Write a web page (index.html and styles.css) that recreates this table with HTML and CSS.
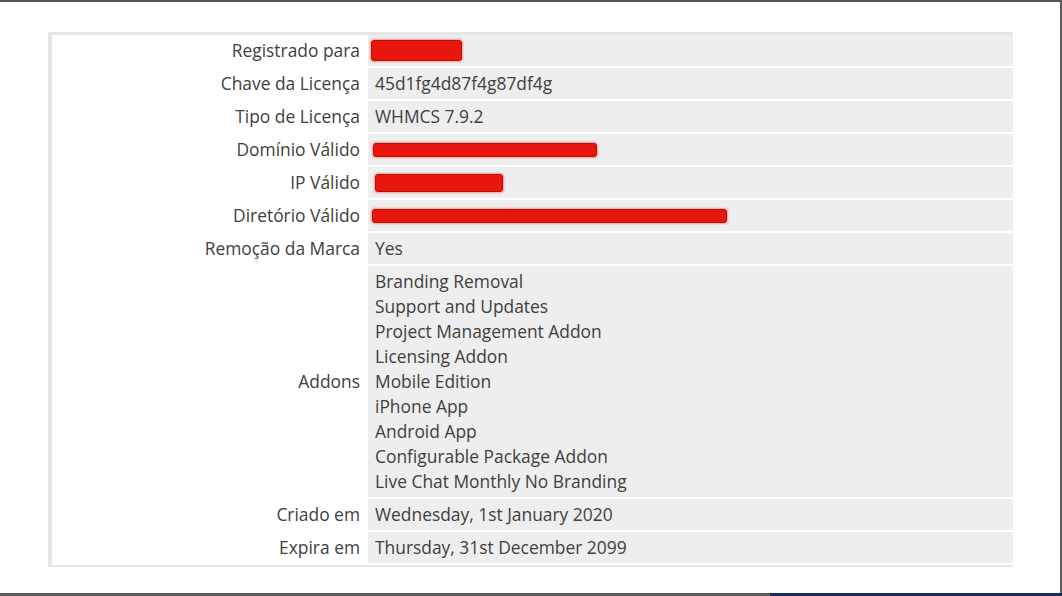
FILE: index.html
```html
<!DOCTYPE html>
<html lang="pt">
<head>
<meta charset="utf-8">
<title>Licença</title>
<link rel="stylesheet" href="styles.css">
</head>
<body>
<div class="frame">
  <main class="main">
    <section class="panel">
      <div class="row"><div class="label">Registrado para</div><div class="value"><span class="redact redact-name"></span></div></div>
      <div class="row"><div class="label">Chave da Licença</div><div class="value">45d1fg4d87f4g87df4g</div></div>
      <div class="row"><div class="label">Tipo de Licença</div><div class="value">WHMCS 7.9.2</div></div>
      <div class="row"><div class="label">Domínio Válido</div><div class="value"><span class="redact redact-domain"></span></div></div>
      <div class="row"><div class="label">IP Válido</div><div class="value"><span class="redact redact-ip"></span></div></div>
      <div class="row"><div class="label">Diretório Válido</div><div class="value"><span class="redact redact-dir"></span></div></div>
      <div class="row"><div class="label">Remoção da Marca</div><div class="value">Yes</div></div>
      <div class="row"><div class="label">Addons</div><div class="value list">
        <div>Branding Removal</div>
        <div>Support and Updates</div>
        <div>Project Management Addon</div>
        <div>Licensing Addon</div>
        <div>Mobile Edition</div>
        <div>iPhone App</div>
        <div>Android App</div>
        <div>Configurable Package Addon</div>
        <div>Live Chat Monthly No Branding</div>
      </div></div>
      <div class="row"><div class="label">Criado em</div><div class="value">Wednesday, 1st January 2020</div></div>
      <div class="row"><div class="label">Expira em</div><div class="value">Thursday, 31st December 2099</div></div>
    </section>
  </main>
  <footer class="bottom-bar"><div class="bar-gray"></div><div class="bar-navy"></div></footer>
</div>
</body>
</html>
```

FILE: styles.css
```css
* { box-sizing: border-box; }
html, body { margin: 0; padding: 0; }
body {
  width: 1062px;
  height: 596px;
  overflow: hidden;
  background: #ffffff;
  font-family: "Open Sans", "Liberation Sans", sans-serif;
  color: #404040;
}
.frame {
  height: 596px;
  display: flex;
  flex-direction: column;
  border-top: 2px solid #555555;
  border-right: 2px solid #5c5c5c;
}
.main {
  flex: 1;
  padding: 30px 0 0 48px;
}
.panel {
  width: 965px;
  display: flex;
  flex-direction: column;
  gap: 2px;
  border-top: 3px solid #e6e6e6;
  border-left: 4px solid #e6e6e6;
  border-bottom: 2px solid #e6e6e6;
  padding-bottom: 2px;
  background: #ffffff;
}
.row {
  display: grid;
  grid-template-columns: 316px 1fr;
  font-size: 17.4px;
  line-height: 25px;
}
.label {
  text-align: right;
  padding: 3px 8px 3px 0;
  display: flex;
  align-items: center;
  justify-content: flex-end;
}
.value {
  background: #eeeeee;
  padding: 3px 7px;
  min-height: 31px;
  display: flex;
  align-items: center;
}
.value.list {
  flex-direction: column;
  align-items: flex-start;
}
.redact {
  display: block;
  background: #e8170e;
  border: 1px solid #b81008;
  border-radius: 3px;
  box-shadow: 0 0 2px 1px rgba(240, 60, 50, 0.45);
}
.redact-name { width: 91px; height: 21px; margin-left: -4px; }
.redact-domain { width: 224px; height: 14px; margin-left: -2px; }
.redact-ip { width: 128px; height: 18px; }
.redact-dir { width: 355px; height: 14px; margin-left: -3px; }
.bottom-bar {
  height: 3px;
  display: flex;
  margin-right: -2px;
}
.bar-gray { width: 770px; background: #5a5a5a; }
.bar-navy { flex: 1; background: #1d2a5c; }
```
